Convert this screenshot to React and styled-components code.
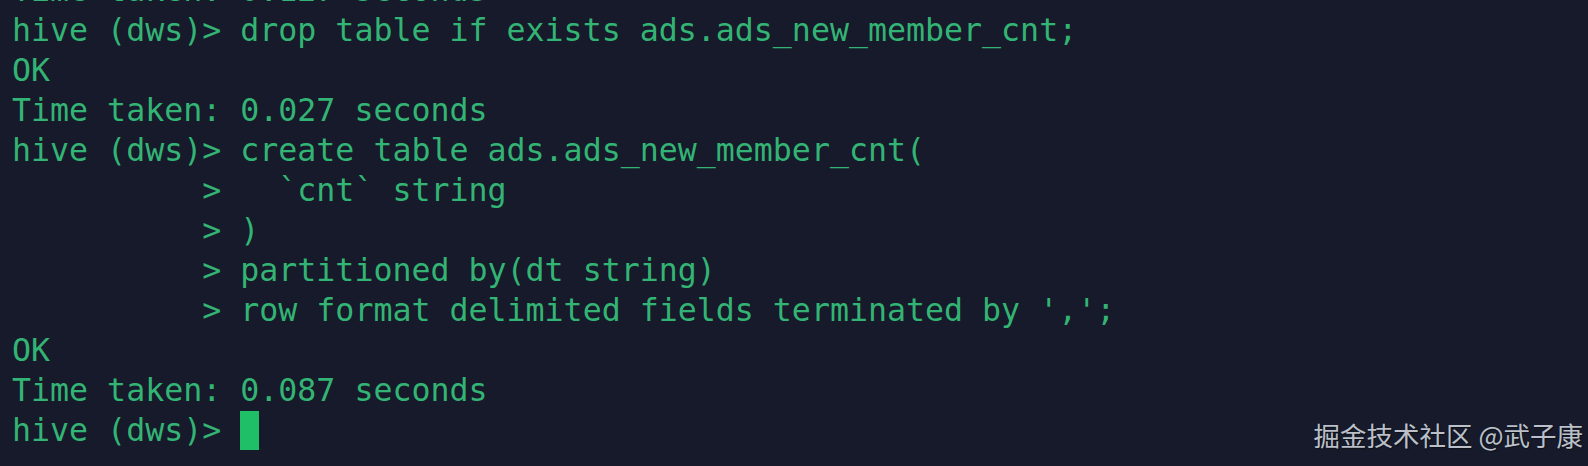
import React from "react";
import styled, { createGlobalStyle } from "styled-components";

const GlobalStyle = createGlobalStyle`
  html, body {
    margin: 0;
    padding: 0;
    background: #161a2a;
  }
`;

const Screen = styled.div`
  position: relative;
  width: 1588px;
  height: 466px;
  overflow: hidden;
  background: #161a2a;
`;

const Output = styled.div`
  display: flex;
  flex-direction: column;
  margin-top: -30px;
  padding-left: 12px;
  font-family: "DejaVu Sans Mono", "Liberation Mono", monospace;
  font-size: 31.6px;
  line-height: 40px;
  color: #33b474;
`;

const Line = styled.div`
  white-space: pre;
  height: 40px;
  display: flex;
  align-items: center;
`;

const Cursor = styled.span`
  display: inline-block;
  width: 19px;
  height: 39px;
  background: #1fbf68;
`;

const Watermark = styled.div`
  position: absolute;
  right: 5px;
  bottom: 15px;
  font-family: "Noto Sans CJK SC", "Noto Sans", sans-serif;
  font-size: 26.5px;
  line-height: 32px;
  color: rgba(220, 224, 232, 0.85);
  text-shadow: 1px 1px 1px rgba(0, 0, 0, 0.4);
`;

const lines = [
  "Time taken: 0.127 seconds",
  "hive (dws)> drop table if exists ads.ads_new_member_cnt;",
  "OK",
  "Time taken: 0.027 seconds",
  "hive (dws)> create table ads.ads_new_member_cnt(",
  "          >   `cnt` string",
  "          > )",
  "          > partitioned by(dt string)",
  "          > row format delimited fields terminated by ',';",
  "OK",
  "Time taken: 0.087 seconds",
];

export default function App() {
  return (
    <>
      <GlobalStyle />
      <Screen>
        <Output>
          {lines.map((text, i) => (
            <Line key={i}>{text}</Line>
          ))}
          <Line>
            {"hive (dws)> "}
            <Cursor />
          </Line>
        </Output>
        <Watermark>掘金技术社区 @武子康</Watermark>
      </Screen>
    </>
  );
}
